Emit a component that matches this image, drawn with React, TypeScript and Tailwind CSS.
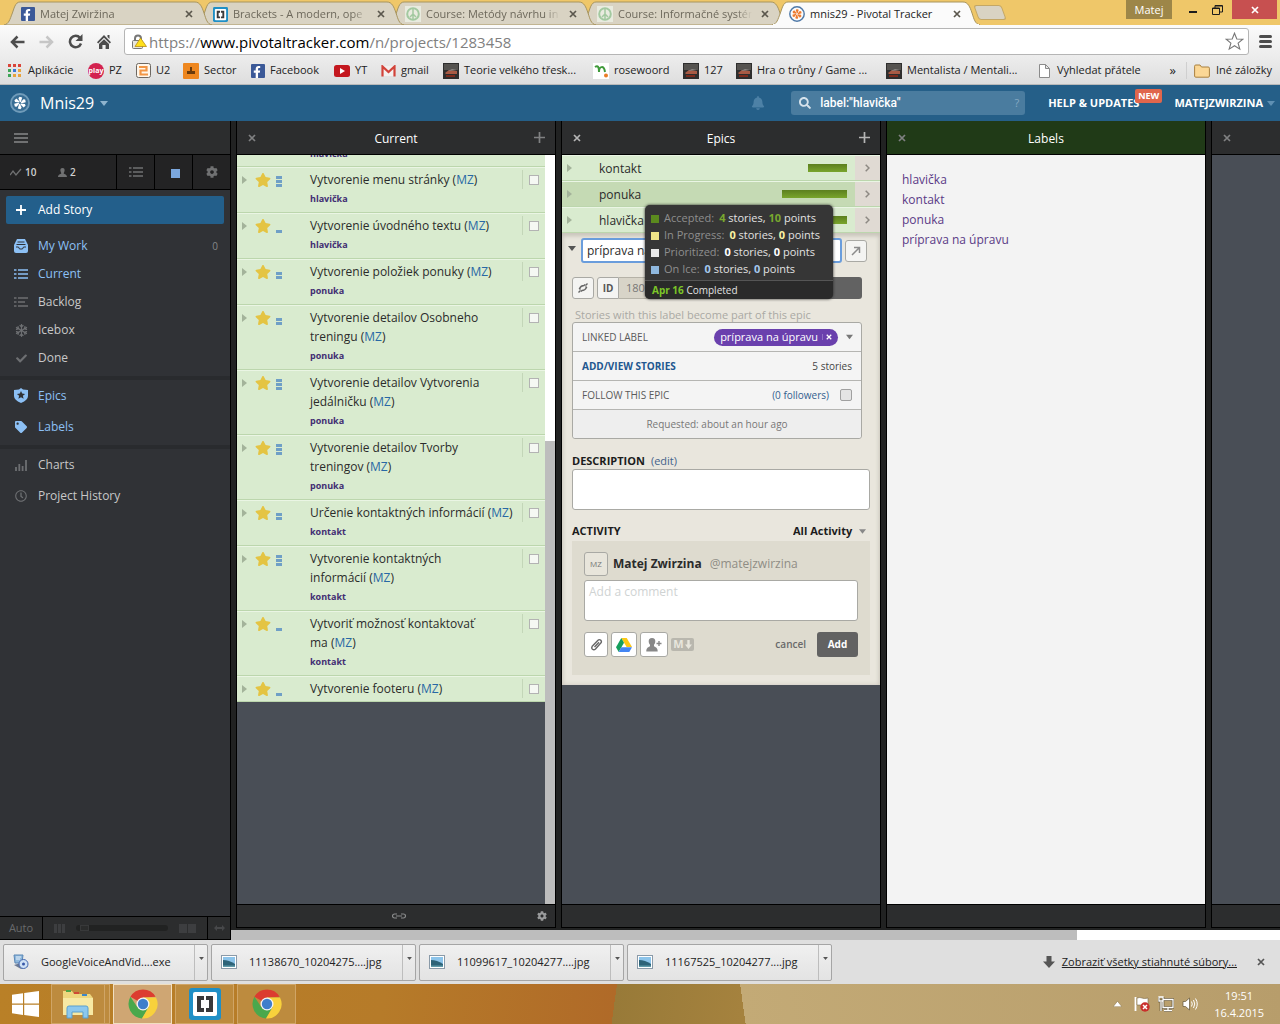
import React from "react";
import { FaBell, FaSearch, FaCog, FaStar, FaTag, FaRegClock, FaCheck, FaRegSnowflake, FaFacebookF } from "react-icons/fa";

type Kids = { children?: React.ReactNode };

const ui = "font-['Open_Sans','Noto_Sans',sans-serif]";

/* ---------- logos ---------- */

function FacebookLogo() {
  return (
    <span className="flex h-[14px] w-[14px] flex-none items-end justify-end overflow-hidden rounded-[1px] bg-[#3b5998] pr-[2px] text-white">
      <FaFacebookF size={12} />
    </span>
  );
}

function BracketsLogo({ size }: { size: number }) {
  return (
    <svg width={size} height={size} viewBox="0 0 32 32" className="flex-none" aria-hidden="true">
      <rect width="32" height="32" rx="3" fill="#1f8fc6" />
      <rect x="4" y="4" width="24" height="24" rx="2" fill="#fff" />
      <path d="M8 8h7v4h-3v8h3v4H8zM24 8h-7v4h3v8h-3v4h7z" fill="#39393b" />
    </svg>
  );
}

function CourseLogo() {
  return (
    <svg width="16" height="16" viewBox="0 0 16 16" className="flex-none" aria-hidden="true">
      <rect width="16" height="16" fill="#e9ebdf" />
      <circle cx="8" cy="8" r="5.8" fill="none" stroke="#a3c9a0" strokeWidth="2" />
      <path d="M8 3v10M5 11l3-3 3 3" stroke="#a3c9a0" strokeWidth="1.500" fill="none" />
    </svg>
  );
}

function PivotalLogo({ ring, petal, size }: { ring: string; petal: string; size: number }) {
  return (
    <svg width={size} height={size} viewBox="0 0 20 20" className="flex-none" aria-hidden="true">
      <circle cx="10" cy="10" r="9" fill="none" stroke={ring} strokeWidth="1.800" />
      {[0, 60, 120, 180, 240, 300].map((a) => (
        <path key={a} d="M10 9.200 L8.400 5.200 L9.600 3.800 L12.200 4.600 L11 8.800Z" fill={petal} transform={`rotate(${a} 10 10)`} />
      ))}
    </svg>
  );
}

function ChromeLogo() {
  return (
    <svg width="30" height="30" viewBox="0 0 30 30" aria-hidden="true">
      <path d="M15 15L2.440 7.750A14.500 14.500 0 0 1 27.560 7.750L15 8.500Z" fill="#dc3c30" />
      <path d="M2.440 7.750A14.500 14.500 0 0 0 14 29.500L20.600 18.300L15 15L9.400 18.300Z" fill="#4aa84c" />
      <path d="M14 29.500A14.500 14.500 0 0 0 28 8.500H15L20.600 18.300Z" fill="#f8d13c" />
      <circle cx="15" cy="15" r="6.500" fill="#f4f4f4" />
      <circle cx="15" cy="15" r="5.200" fill="#3f7ecb" />
    </svg>
  );
}

function VideoThumb() {
  return (
    <svg width="16" height="16" viewBox="0 0 16 16" className="flex-none" aria-hidden="true">
      <rect width="16" height="16" fill="#2e2e2e" />
      <rect x="1" y="1" width="14" height="6" fill="#555350" />
      <path d="M2 10l4-3 8 1v3H3z" fill="#a85a44" />
      <path d="M5 8l4-2 5 1z" fill="#8d8986" />
      <path d="M3 13h9" stroke="#7b2a1c" strokeWidth="2" />
    </svg>
  );
}

/* ---------- browser chrome ---------- */

function Cross({ className = "" }: { className?: string }) {
  return (
    <svg width="8" height="8" viewBox="0 0 8 8" className={className} aria-hidden="true">
      <path d="M1 1l6 6M7 1l-6 6" stroke="currentColor" strokeWidth="1.700" />
    </svg>
  );
}

function Tab({ icon, title, active, layer }: { icon: React.ReactNode; title: string; active?: boolean; layer: string }) {
  return (
    <div className={`relative -mr-4 flex h-6 w-52 flex-none items-center ${layer}`}>
      <svg className="absolute inset-0 h-full w-full" viewBox="0 0 208 24" preserveAspectRatio="none" aria-hidden="true">
        <path d="M0 24C5 23 6 18 8 13S11 1 16 1H191C196 1 198 6 200 12S203 23 208 24Z" fill={active ? "#fbfbfb" : "#d9d3c3"} stroke="#a8955f" />
        {active && <path d="M1 24H207" stroke="#fbfbfb" strokeWidth="2" />}
      </svg>
      <button className={`relative ml-[17px] flex w-[155px] items-center gap-[5px] overflow-hidden whitespace-nowrap pt-[2px] text-left text-[11px] leading-4 ${active ? "text-[#222]" : "text-[#6d685b]"}`}>
        {icon}
        <span className={active ? "" : "min-w-0 flex-1 overflow-hidden [mask-image:linear-gradient(to_right,black_88%,transparent)]"}>{title}</span>
      </button>
      <button aria-label={`Close ${title}`} className="relative ml-auto mr-[19px] mt-[2px] text-[#5b574d]">
        <Cross />
      </button>
    </div>
  );
}

function TabStrip() {
  return (
    <div className="flex h-[25px] flex-none items-start bg-[#efc769]">
      <div className="flex min-w-0 pl-1 pt-px">
        <Tab layer="z-[4]" icon={<FacebookLogo />} title="Matej Zwiržina" />
        <Tab layer="z-[3]" icon={<BracketsLogo size={15} />} title="Brackets - A modern, ope" />
        <Tab layer="z-[2]" icon={<CourseLogo />} title="Course: Metódy návrhu in" />
        <Tab layer="z-[1]" icon={<CourseLogo />} title="Course: Informačné systém" />
        <Tab layer="z-[5]" active icon={<PivotalLogo size={16} ring="#4f79a8" petal="#ee7b30" />} title="mnis29 - Pivotal Tracker" />
      </div>
      <button aria-label="New tab" className="ml-3 mt-[5px] h-[15px] w-7 skew-x-[20deg] rounded-[3px] border border-[#c4a765] bg-[#d9d3c3]" />
      <div className="ml-auto flex items-start pr-[3px]">
        <button className="h-[19px] w-[46px] bg-[#9d8648] text-[11px] leading-[18px] text-white">Matej</button>
        <button aria-label="Minimize" className="flex h-[19px] w-[33px] items-center justify-center pl-2 pt-[5px]">
          <span className="h-[2px] w-2 bg-[#1c1c1c]" />
        </button>
        <button aria-label="Restore" className="mr-[5px] flex h-[19px] w-[22px] items-center justify-end pr-1">
          <svg width="11" height="10" viewBox="0 0 11 10" aria-hidden="true">
            <path d="M.5 3h7v6.500h-7zM3 3V.5h7.500V7H8M.5 3.500h7M3 1h7" fill="none" stroke="#1c1c1c" />
          </svg>
        </button>
        <button aria-label="Close window" className="flex h-[19px] w-[45px] items-center justify-center bg-[#c75050] text-white">
          <Cross />
        </button>
      </div>
    </div>
  );
}

function Toolbar() {
  return (
    <div className="flex h-8 flex-none items-center bg-gradient-to-b from-[#fbfbfb] to-[#ececec] pr-2 pt-px">
      <div className="flex w-[124px] flex-none items-center gap-[14px] pl-[10px] text-[#4d4d4d]">
        <button aria-label="Back">
          <svg width="15" height="14" viewBox="0 0 15 14" aria-hidden="true">
            <path d="M14.500 7H2M7.500 1.500L2 7l5.500 5.500" fill="none" stroke="currentColor" strokeWidth="2.500" />
          </svg>
        </button>
        <button aria-label="Forward" className="text-[#c6c6c6]">
          <svg width="15" height="14" viewBox="0 0 15 14" aria-hidden="true">
            <path d="M.5 7H13M7.500 1.500L13 7l-5.500 5.500" fill="none" stroke="currentColor" strokeWidth="2.500" />
          </svg>
        </button>
        <button aria-label="Reload">
          <svg width="15" height="15" viewBox="0 0 15 15" aria-hidden="true">
            <path d="M12 3.800A5.700 5.700 0 1 0 13 9.500" fill="none" stroke="currentColor" strokeWidth="2.500" />
            <path d="M14.500 0v7H7.500z" fill="currentColor" />
          </svg>
        </button>
        <button aria-label="Home">
          <svg width="14" height="14" viewBox="0 0 14 14" aria-hidden="true">
            <path d="M7 0l7 7.200-1.200 1.200L7 2.800 1.200 8.400 0 7.200zM10.500 0h2v4l-2-2zM7 4.200l5 4.800v5H8.600v-4H5.400v4H2V9z" fill="currentColor" />
          </svg>
        </button>
      </div>
      <div className="flex h-[27px] min-w-0 flex-1 items-center rounded-[3px] border border-[#b5b5b5] bg-white pl-[6px] pr-1">
        <svg width="16" height="16" viewBox="0 0 16 16" className="flex-none" aria-hidden="true">
          <path d="M4 7V4.500a3 3 0 0 1 6 0V7" fill="none" stroke="#777" strokeWidth="2" />
          <rect x="1.500" y="6.500" width="10" height="8" rx="1" fill="#e8e6dd" stroke="#777" />
          <path d="M9.500 4L15.500 12.500H4z" fill="#ffe01b" stroke="#b98f12" strokeWidth=".8" />
        </svg>
        <div className="ml-[2px] flex-1 whitespace-nowrap text-[15px] leading-5 text-[#808080]">
          https://<span className="text-black">www.pivotaltracker.com</span>/n/projects/1283458
        </div>
        <button aria-label="Bookmark this page">
          <svg width="19" height="19" viewBox="0 0 19 19" aria-hidden="true">
            <path d="M9.500 1.200l2.300 5.800 6 .3-4.700 3.800 1.700 6-5.300-3.400-5.300 3.400 1.700-6L1.200 7.300l6-.3z" fill="#fff" stroke="#787878" strokeWidth="1.100" />
          </svg>
        </button>
      </div>
      <button aria-label="Menu" className="ml-[10px] flex w-[13px] flex-col gap-[2px]">
        <span className="h-[3px] rounded-sm bg-[#4d4d4d]" />
        <span className="h-[3px] rounded-sm bg-[#4d4d4d]" />
        <span className="h-[3px] rounded-sm bg-[#4d4d4d]" />
      </button>
    </div>
  );
}

function Mark({ icon, title, width }: { icon: React.ReactNode; title: string; width: string }) {
  return (
    <a href="#" className={`flex flex-none items-center gap-[5px] whitespace-nowrap ${width}`}>
      {icon}
      {title}
    </a>
  );
}

function Bookmarks() {
  const dots = ["#d9453a", "#d9453a", "#d9453a", "#3fa557", "#3b78d8", "#e8a33d", "#3fa557", "#e8a33d", "#e8a33d"];
  return (
    <nav className="flex h-[28px] flex-none items-center border-b border-[#b9b9b9] bg-gradient-to-b from-[#ececec] to-[#dedede] pl-2 pr-2 text-[11px] text-[#222]">
      <a href="#" className="flex w-20 flex-none items-center gap-[7px]">
        <svg width="13" height="13" viewBox="0 0 13 13" aria-hidden="true">
          {dots.map((c, i) => (
            <rect key={i} x={(i % 3) * 5} y={Math.floor(i / 3) * 5} width="3" height="3" fill={c} />
          ))}
        </svg>
        Aplikácie
      </a>
      <Mark width="w-12" title="PZ" icon={<span className="flex h-4 w-4 items-center justify-center rounded-full bg-[#d3224f] text-[7px] font-bold leading-none text-white">play</span>} />
      <Mark
        width="w-[47px]"
        title="U2"
        icon={
          <svg width="15" height="15" viewBox="0 0 15 15" aria-hidden="true">
            <rect x=".5" y=".5" width="14" height="14" rx="2" fill="#fff6ea" stroke="#6d6862" />
            <path d="M3 4h7.500v3.500H4.500v4H12" fill="none" stroke="#f29544" strokeWidth="2.200" />
          </svg>
        }
      />
      <Mark
        width="w-[68px]"
        title="Sector"
        icon={
          <svg width="16" height="16" viewBox="0 0 16 16" aria-hidden="true">
            <rect width="16" height="16" rx="1" fill="#ee871f" />
            <path d="M7 4h2v4h3v3H4V8h3z" fill="#6a3b0c" />
          </svg>
        }
      />
      <Mark width="w-[83px]" title="Facebook" icon={<FacebookLogo />} />
      <Mark
        width="w-[47px]"
        title="YT"
        icon={
          <svg width="16" height="12" viewBox="0 0 16 12" aria-hidden="true">
            <rect width="16" height="12" rx="2.500" fill="#c4181f" />
            <path d="M6 3l5 3-5 3z" fill="#fff" />
          </svg>
        }
      />
      <Mark
        width="w-[62px]"
        title="gmail"
        icon={
          <svg width="15" height="12" viewBox="0 0 15 12" aria-hidden="true">
            <rect x="1" y="1" width="13" height="10" fill="#f3f0ef" />
            <path d="M1.500 11.500V1.500L7.500 7l6-5.500v10" fill="none" stroke="#d2433a" strokeWidth="2.200" />
          </svg>
        }
      />
      <Mark width="w-[150px]" title="Teorie velkého třesk..." icon={<VideoThumb />} />
      <Mark
        width="w-[90px]"
        title="rosewoord"
        icon={
          <svg width="16" height="16" viewBox="0 0 16 16" aria-hidden="true">
            <rect width="16" height="16" fill="#fff" />
            <path d="M2 4c3-2 4 0 4 5 0-6 5-7 6 0" fill="none" stroke="#3f9a3a" strokeWidth="2" />
            <circle cx="13" cy="12.500" r="2" fill="#ea7c25" />
          </svg>
        }
      />
      <Mark width="w-[53px]" title="127" icon={<VideoThumb />} />
      <Mark width="w-[150px]" title="Hra o trůny / Game ..." icon={<VideoThumb />} />
      <Mark width="w-[152px]" title="Mentalista / Mentali..." icon={<VideoThumb />} />
      <Mark
        width="w-[120px]"
        title="Vyhledat přátele"
        icon={
          <svg width="13" height="14" viewBox="0 0 13 14" className="mr-px" aria-hidden="true">
            <path d="M1.500.5h6l4 4v9h-10zM7.500.5v4h4" fill="#fff" stroke="#8b8b8b" />
          </svg>
        }
      />
      <button aria-label="More bookmarks" className="ml-auto mr-[10px] text-[13px]">»</button>
      <a href="#" className="flex flex-none items-center gap-[6px] whitespace-nowrap border-l border-[#cfcfcf] pl-[7px]">
        <svg width="16" height="14" viewBox="0 0 16 14" aria-hidden="true">
          <path d="M.6 12V2.200Q.6 1 1.800 1H6l1.500 2h6.700q1.200 0 1.200 1.200V12q0 1.200-1.200 1.200H1.800Q.6 13.200.6 12z" fill="#fbd795" stroke="#a9803f" />
        </svg>
        Iné záložky
      </a>
    </nav>
  );
}

/* ---------- tracker header ---------- */

function Caret({ className = "" }: { className?: string }) {
  return (
    <svg width="8" height="5" viewBox="0 0 8 5" className={`flex-none ${className}`} aria-hidden="true">
      <path d="M0 0h8L4 5z" fill="currentColor" />
    </svg>
  );
}

function AppHeader() {
  return (
    <header className="flex h-9 flex-none items-center bg-[#255f88] pl-[10px] pr-[5px]">
      <span className="rounded-full bg-[#376d94]">
        <PivotalLogo size={20} ring="#6f9bb9" petal="#fff" />
      </span>
      <button className="ml-[10px] flex items-center gap-[6px] text-[16px] leading-5 text-white">
        Mnis29 <Caret className="text-[#8fb4ce]" />
      </button>
      <button aria-label="Notifications" className="ml-auto mr-[26px] text-[#4d81a6]">
        <FaBell size={14} />
      </button>
      <div className="flex h-6 w-[234px] items-center rounded-[3px] bg-[#4a7c9f] pl-2 pr-[6px]">
        <FaSearch size={12} className="flex-none text-[#d5e2eb]" />
        <input aria-label="Search" defaultValue={'label:"hlavička"'} className="ml-[9px] w-full min-w-0 bg-transparent font-['Roboto','Liberation_Sans',sans-serif] text-[12px] font-medium text-white outline-none" />
        <span className="text-[11px] text-[#85a9c2]">?</span>
      </div>
      <button className="relative ml-[23px] text-[11px] font-bold text-white">
        HELP &amp; UPDATES
        <span className="absolute -top-[6px] left-[87px] rounded-[2px] bg-[#e0664c] px-[3px] text-[9px] leading-[14px]">NEW</span>
      </button>
      <button className="ml-[35px] flex items-center gap-[4px] text-[11px] font-bold text-white">
        MATEJZWIRZINA <Caret className="text-[#5f90b3]" />
      </button>
    </header>
  );
}

/* ---------- sidebar ---------- */

function ListGlyph({ short }: { short?: boolean }) {
  return (
    <svg width="14" height="12" viewBox="0 0 14 12" aria-hidden="true">
      <path d={short ? "M4 2H14M4 6H11M4 10H14" : "M4 2H14M4 6H14M4 10H14"} stroke="currentColor" strokeWidth="1.600" />
      <path d="M0 2H2.500M0 6H2.500M0 10H2.500" stroke="currentColor" strokeWidth="1.600" />
    </svg>
  );
}

function NavItem({ icon, label, on, tall, count }: { icon: React.ReactNode; label: string; on?: boolean; tall?: boolean; count?: string }) {
  return (
    <a href="#" className={`flex items-center pl-[14px] pr-3 text-[12px] ${tall ? "h-[31px]" : "h-7"} ${on ? "text-[#8cc0f5]" : "text-[#c8c8c8]"}`}>
      <span className={`flex w-[14px] justify-center ${on ? "" : "text-[#6d6f72]"}`}>{icon}</span>
      <span className="ml-[10px]">{label}</span>
      {count && <span className="ml-auto text-[10px] text-[#85878a]">{count}</span>}
    </a>
  );
}

function Sidebar() {
  return (
    <aside className="flex w-[231px] flex-none flex-col border-r border-black bg-[#303236]">
      <div className="flex h-[34px] flex-none items-center border-b border-black bg-[#2c2d2e] pl-[14px]">
        <button aria-label="Toggle sidebar" className="flex w-[14px] flex-col gap-[2px]">
          <span className="h-[2px] bg-[#707172]" />
          <span className="h-[2px] bg-[#707172]" />
          <span className="h-[2px] bg-[#707172]" />
        </button>
      </div>
      <div className="flex h-[35px] flex-none items-stretch border-b border-black bg-[#232324] text-[10px] font-semibold text-[#d0d0d0]">
        <div className="flex flex-1 items-center pl-[10px]">
          <svg width="12" height="9" viewBox="0 0 12 9" aria-hidden="true">
            <path d="M0 7L3 3l3 4 5-6" fill="none" stroke="#707172" strokeWidth="1.300" />
          </svg>
          <span className="ml-[3px] w-[33px]">10</span>
          <svg width="9" height="9" viewBox="0 0 9 9" aria-hidden="true">
            <path d="M4.500 0C6.300 0 6.800 1.200 6.600 2.800 6.400 4 5.800 4.600 5.700 5.500 6.500 6.300 9 6.500 9 9H0C0 6.500 2.500 6.300 3.300 5.500 3.200 4.600 2.600 4 2.400 2.800 2.200 1.200 2.700 0 4.500 0z" fill="#707172" />
          </svg>
          <span className="ml-[3px]">2</span>
        </div>
        <button aria-label="List view" className="flex w-[38px] items-center justify-center border-l border-black text-[#707172]">
          <ListGlyph />
        </button>
        <button aria-label="Panel view" className="flex w-[38px] items-center justify-center border-l border-black pl-[3px] pt-[2px]">
          <span className="h-[9px] w-[9px] bg-[#7ba7dd]" />
        </button>
        <button aria-label="Settings" className="flex w-[38px] items-center justify-center border-l border-black text-[#707172]">
          <FaCog size={12} />
        </button>
      </div>
      <button className="mx-[6px] mb-2 mt-[6px] flex h-7 flex-none items-center rounded-[2px] bg-[#235f8b] pl-[10px] text-[12px] text-white">
        <svg width="10" height="10" viewBox="0 0 10 10" aria-hidden="true">
          <path d="M5 0v10M0 5h10" stroke="#fff" strokeWidth="1.800" />
        </svg>
        <span className="ml-3">Add Story</span>
      </button>
      <nav>
        <div className="border-b-4 border-[#292b2e] pb-1">
          <NavItem
            on
            label="My Work"
            count="0"
            icon={
              <svg width="14" height="14" viewBox="0 0 14 14" aria-hidden="true">
                <path d="M3 0h8l3 6v6q0 2-2 2H2q-2 0-2-2V6z" fill="currentColor" />
                <path d="M3.500 3h7M2.500 5.500h9M2 8h2.500l1 2h3l1-2H12" stroke="#303236" fill="none" />
              </svg>
            }
          />
          <NavItem on label="Current" icon={<ListGlyph />} />
          <NavItem label="Backlog" icon={<ListGlyph short />} />
          <NavItem label="Icebox" icon={<FaRegSnowflake size={13} />} />
          <NavItem label="Done" icon={<FaCheck size={11} />} />
        </div>
        <div className="border-b-4 border-[#292b2e] pb-[3px]">
          <NavItem
            on
            tall
            label="Epics"
            icon={
              <svg width="14" height="15" viewBox="0 0 14 15" aria-hidden="true">
                <path d="M7 0l2 1.500L14 2v6q0 4-7 7Q0 12 0 8V2l5-.5z" fill="currentColor" />
                <path d="M7 3l1.200 2.600 2.900.3-2.200 1.900.7 2.900L7 9.200l-2.600 1.500.7-2.900-2.200-1.900 2.900-.3z" fill="#303236" />
              </svg>
            }
          />
          <NavItem on tall label="Labels" icon={<FaTag size={12} />} />
        </div>
        <NavItem
          tall
          label="Charts"
          icon={
            <svg width="12" height="12" viewBox="0 0 12 12" aria-hidden="true">
              <path d="M1 12V8M4.300 12V5M7.600 12V7M11 12V1" stroke="currentColor" strokeWidth="1.800" />
            </svg>
          }
        />
        <NavItem tall label="Project History" icon={<FaRegClock size={12} />} />
      </nav>
      <div className="mt-auto flex h-[24px] flex-none items-stretch border-y border-black bg-[#2c2d2e] text-[11px] text-[#686a6c]">
        <button className="w-[43px] border-r border-black">Auto</button>
        <div className="flex flex-1 items-center gap-[11px] px-[11px]">
          <span className="flex gap-px">
            <span className="h-[9px] w-[3px] bg-[#3d3e40]" />
            <span className="h-[9px] w-[3px] bg-[#3d3e40]" />
            <span className="h-[9px] w-[3px] bg-[#3d3e40]" />
          </span>
          <span className="h-[6px] flex-1 rounded bg-[#212222] pl-[4px]">
            <span className="block h-[6px] w-[9px] border border-[#38393a] bg-[#2b2c2c]" />
          </span>
          <span className="flex gap-px">
            <span className="h-[9px] w-2 bg-[#3d3e40]" />
            <span className="h-[9px] w-2 bg-[#3d3e40]" />
          </span>
        </div>
        <button aria-label="Resize panels" className="flex w-[23px] items-center justify-center border-l border-black text-[#47484a]">
          <svg width="11" height="6" viewBox="0 0 11 6" aria-hidden="true">
            <path d="M0 3l3-3v2h5V0l3 3-3 3V4H3v2z" fill="currentColor" />
          </svg>
        </button>
      </div>
    </aside>
  );
}

/* ---------- panels ---------- */

function Panel({ title, add, lit, tone = "bg-[#2c2d2e]", children, foot }: { title: string; add?: boolean; lit?: boolean; tone?: string; foot?: React.ReactNode } & Kids) {
  return (
    <section className="relative flex w-[320px] flex-none flex-col border-x border-b border-black bg-[#494e56]">
      <div className={`flex h-[34px] flex-none items-center border-b border-black px-[10px] ${tone} ${lit ? "text-[#b5b5b5]" : "text-[#808182]"}`}>
        <button aria-label={`Close ${title}`} className="flex w-3 pl-px"><Cross /></button>
        <h2 className="flex-1 pt-[2px] text-center text-[12px] text-white">{title}</h2>
        <button aria-label={`Add to ${title}`} className="flex w-3 justify-end">
          {add && (
            <svg width="11" height="11" viewBox="0 0 11 11" aria-hidden="true">
              <path d="M5.500 0v11M0 5.500h11" stroke="currentColor" strokeWidth="1.700" />
            </svg>
          )}
        </button>
      </div>
      <div className="flex min-h-0 flex-1">{children}</div>
      <div className="flex h-[23px] flex-none items-center border-t border-black bg-[#2c2d2e]">{foot}</div>
    </section>
  );
}

const stories: { title: string; points: number; label?: string }[] = [
  { title: "Vytvorenie menu stránky", points: 3, label: "hlavička" },
  { title: "Vytvorenie úvodného textu", points: 1, label: "hlavička" },
  { title: "Vytvorenie položiek ponuky", points: 2, label: "ponuka" },
  { title: "Vytvorenie detailov Osobneho treningu", points: 2, label: "ponuka" },
  { title: "Vytvorenie detailov Vytvorenia jedálničku", points: 3, label: "ponuka" },
  { title: "Vytvorenie detailov Tvorby treningov", points: 3, label: "ponuka" },
  { title: "Určenie kontaktných informácií", points: 2, label: "kontakt" },
  { title: "Vytvorenie kontaktných informácií", points: 3, label: "kontakt" },
  { title: "Vytvoriť možnosť kontaktovať ma", points: 1, label: "kontakt" },
  { title: "Vytvorenie footeru", points: 1 },
];

function Arrow() {
  return (
    <svg width="5" height="8" viewBox="0 0 5 8" className="flex-none" aria-hidden="true">
      <path d="M0 0v8l5-4z" fill="#a3b39a" />
    </svg>
  );
}

function CurrentPanel() {
  return (
    <Panel
      title="Current"
      add
      foot={
        <>
          <span className="w-[24px]" />
          <button aria-label="Link" className="mx-auto text-[#8a8b8c]">
            <svg width="14" height="6" viewBox="0 0 14 6" aria-hidden="true">
              <path d="M5 1H2.500a2 2 0 0 0 0 4H5M9 1h2.500a2 2 0 0 1 0 4H9M4 3h6" fill="none" stroke="currentColor" strokeWidth="1.200" />
            </svg>
          </button>
          <button aria-label="Panel settings" className="mr-2 text-[#9a9b9c]">
            <FaCog size={10} />
          </button>
        </>
      }
    >
      <div className="min-w-0 flex-1 overflow-hidden">
        <div className="flex h-3 items-end overflow-hidden border-b border-[#bcd6ad] bg-[#d9ebcf] pb-[5px] pl-[73px] text-[9px] font-bold leading-[15px] text-[#422e73]">hlavička</div>
        {stories.map((s) => (
          <article key={s.title} className="flex items-start border-b border-t border-b-[#bcd6ad] border-t-[#eaf5e4] bg-[#d9ebcf] pb-[3px] pl-[5px] pr-[6px] pt-[2px]">
            <button aria-label="Expand story" className="mt-[6px]"><Arrow /></button>
            <FaStar size={16} className="ml-2 mt-[2px] flex-none text-[#e4c443]" />
            <div className="ml-[5px] flex h-[17px] w-[6px] flex-none flex-col justify-end gap-px">
              {Array.from({ length: s.points }, (_, i) => (
                <span key={i} className="h-[3px] bg-[#6f9fc6]" />
              ))}
            </div>
            <div className="ml-7 w-[208px] flex-none text-[12px] leading-[19px] text-[#2b2b2b]">
              {s.title}{"\u00a0"}(<a href="#" className="text-[#2868a5]">MZ</a>)
              {s.label && <a href="#" className="block text-[9px] font-bold leading-5 text-[#422e73]">{s.label}</a>}
            </div>
            <div className="ml-auto flex h-[19px] items-center border-l border-[#c3d6b8] pl-[6px]">
              <input type="checkbox" aria-label={s.title} className="h-[10px] w-[10px] appearance-none border border-[#b3b3b3] bg-[#f5f8f3]" />
            </div>
          </article>
        ))}
      </div>
      <div className="flex w-[10px] flex-none flex-col bg-white pt-[286px]">
        <div className="flex-1 bg-[#bdbdbd]" />
      </div>
    </Panel>
  );
}

function EpicRow({ name, bar, tone }: { name: string; bar: string; tone: string }) {
  return (
    <div className={`flex h-[26px] items-stretch border-b border-t border-b-[#bcd6ad] border-t-[#eaf5e4] ${tone}`}>
      <button className="flex flex-1 items-center gap-[27px] pl-[5px] text-[12px] text-[#2b2b2b]">
        <Arrow />
        <span className="pt-[2px]">{name}</span>
      </button>
      <span className={`mr-2 mt-2 h-2 bg-gradient-to-b from-[#5c7f1f] to-[#79a52c] ${bar}`} />
      <button aria-label={`Open ${name}`} className="flex w-[25px] items-center justify-center bg-[#e0dad3] text-[#8d8983]">
        <svg width="5" height="8" viewBox="0 0 5 8" aria-hidden="true">
          <path d="M.7.7L4 4 .7 7.300" fill="none" stroke="currentColor" strokeWidth="1.500" />
        </svg>
      </button>
    </div>
  );
}

function TipRow({ swatch, name, tone, stories: n, points }: { swatch: string; name: string; tone: string; stories: number; points: number }) {
  return (
    <div className="flex h-[17px] items-center whitespace-nowrap text-[11px] text-[#e2e2e2]">
      <span className={`mr-[5px] h-2 w-2 ${swatch}`} />
      <span className="mr-[5px] text-[#8e8e8e]">{name}:</span>
      <span><b className={tone}>{n}</b> stories, <b className={tone}>{points}</b> points</span>
    </div>
  );
}

function Tip() {
  return (
    <div role="tooltip" className="absolute left-[83px] top-[84px] z-10 w-[188px] rounded-[5px] bg-[#363636] pt-[5px] shadow-[0_0_3px_#222]">
      <div className="px-[6px] pb-[2px]">
        <TipRow swatch="bg-[#5b8a1e]" name="Accepted" tone="text-[#79a82f]" stories={4} points={10} />
        <TipRow swatch="bg-[#efe487]" name="In Progress" tone="text-[#fbf3a3]" stories={0} points={0} />
        <TipRow swatch="bg-[#e8e8e8]" name="Prioritized" tone="text-white" stories={0} points={0} />
        <TipRow swatch="bg-[#8fb8de]" name="On Ice" tone="text-[#a5c8ec]" stories={0} points={0} />
      </div>
      <div className="h-[19px] rounded-b-[5px] border-t border-[#555] bg-[#2a2a2a] px-[7px] text-[10px] leading-[18px] text-[#e2e2e2]">
        <b className="text-[#7cc528]">Apr 16</b> Completed
      </div>
    </div>
  );
}

const box = "flex items-center justify-center rounded-[3px] border border-[#a9a9a4] bg-[#f4f4f2]";

function EpicForm() {
  return (
    <form className="flex flex-col bg-[#e9e6dd] pb-[10px] pl-[10px] pr-[10px] pt-[5px] shadow-[inset_0_3px_4px_#c9c5bb,inset_0_0_5px_#cfcac0]">
      <div className="-ml-1 flex h-[25px] items-center">
        <button type="button" aria-label="Collapse" className="mb-[5px] text-[#555]"><Caret /></button>
        <input aria-label="Epic title" defaultValue="príprava na úpravu" className="ml-[5px] mr-[3px] h-[25px] min-w-0 flex-1 rounded-[3px] border-2 border-[#6a9ddc] bg-white px-1 text-[12px] text-[#2b2b2b] outline-none" />
        <button type="button" aria-label="Open epic" className={`mr-[3px] h-[22px] w-[22px] ${box} text-[#8b8b8b]`}>
          <svg width="10" height="10" viewBox="0 0 10 10" aria-hidden="true">
            <path d="M1 9l7-7M3 1.500h5.500V7" fill="none" stroke="currentColor" strokeWidth="1.500" />
          </svg>
        </button>
      </div>
      <div className="mr-2 mt-[14px] flex h-[22px]">
        <button type="button" aria-label="Copy link" className={`w-[22px] ${box}`}>
          <svg width="10" height="10" viewBox="0 0 10 10" aria-hidden="true">
            <path d="M2.500 6.500L1.500 5.500Q3 2.500 6 2.500L7 1.500M7.500 3.500L8.500 4.500Q7 7.500 4 7.500L3 8.500M.5 9.500l2-2M9.500.5l-2 2" fill="none" stroke="#666" strokeWidth="1.400" />
          </svg>
        </button>
        <button type="button" className={`ml-[3px] w-[22px] ${box} rounded-r-none text-[10px] font-bold text-[#555]`}>ID</button>
        <input aria-label="Epic ID" readOnly defaultValue="180" className="w-[60px] border-y border-[#b5b2a7] bg-[#d8d4c8] px-[7px] text-[11px] text-[#777] outline-none" />
        <button type="button" aria-label="More actions" className="flex-1 rounded-r-[3px] bg-[#626262]" />
      </div>
      <p className="ml-[3px] mt-[9px] text-[11px] leading-[14px] text-[#aaa9a4]">Stories with this label become part of this epic</p>
      <div className="mr-2 rounded-[3px] border border-[#a9a9a4] bg-[#f4f4f4] text-[10px] text-[#5a5a5a]">
        <div className="flex h-[29px] items-center border-b border-[#b5b5b2] pl-[9px] pr-2">
          LINKED LABEL
          <span className="ml-auto flex h-[17px] items-center rounded-full bg-[#6a40ad] pl-[6px] pr-[6px] text-[11px] text-white">
            príprava na úpravu
            <button type="button" aria-label="Remove label" className="ml-[4px] border-l border-[#8f6fc4] pl-[3px]"><Cross className="h-[6px] w-[6px]" /></button>
          </span>
          <button type="button" aria-label="Choose label" className="ml-2 text-[#777]"><Caret className="h-[6px] w-[7px]" /></button>
        </div>
        <div className="flex h-[29px] items-center justify-between border-b border-[#b5b5b2] px-[9px]">
          <a href="#" className="font-bold text-[#22578f]">ADD/VIEW STORIES</a>
          <span className="text-[#444]">5 stories</span>
        </div>
        <div className="flex h-[29px] items-center border-b border-[#b5b5b2] px-[9px]">
          <label htmlFor="follow">FOLLOW THIS EPIC</label>
          <a href="#" className="ml-auto mr-[11px] text-[#33608f]">(0 followers)</a>
          <input id="follow" type="checkbox" className="h-3 w-3 appearance-none rounded-[2px] border border-[#a0a0a0] bg-[#e4e4e4]" />
        </div>
        <div className="flex h-7 items-center justify-center rounded-b-[3px] bg-[#eeeeee] text-[#777]">Requested: about an hour ago</div>
      </div>
      <div className="mt-[14px] flex h-4 items-center gap-[6px] text-[11px]">
        <label htmlFor="description" className="font-bold text-[#1c1c1c]">DESCRIPTION</label>
        <a href="#" className="text-[#44628b]">(edit)</a>
      </div>
      <textarea id="description" className="block h-[41px] w-full resize-none rounded-[3px] border border-[#a9a9a4] bg-white" />
      <div className="mt-3 flex h-[19px] items-center justify-between text-[11px] font-bold text-[#1c1c1c]">
        <h3>ACTIVITY</h3>
        <span className="flex items-center pr-1">
          <select aria-label="Activity filter" className="w-[66px] appearance-none bg-transparent pr-1 outline-none">
            <option>All Activity</option>
          </select>
          <Caret className="h-[5px] w-[7px] text-[#888]" />
        </span>
      </div>
      <div className="bg-[#dedbcf] px-3 pb-[18px] pt-[11px]">
        <div className="flex h-6 items-center">
          <span className="flex h-6 w-6 items-center justify-center rounded-[3px] border border-[#a9a9a4] bg-[#e8e5db] text-[8px] text-[#777]">MZ</span>
          <b className="ml-[5px] text-[12px] text-[#2b2b2b]">Matej Zwirzina</b>
          <span className="ml-2 text-[12px] text-[#8f8d85]">@matejzwirzina</span>
        </div>
        <textarea aria-label="Comment" placeholder="Add a comment" className="mt-[4px] block h-[41px] w-full resize-none rounded-[3px] border border-[#a9a9a4] bg-white px-1 py-[2px] text-[12px] placeholder:text-[#cfd3d3]" />
        <div className="mt-[11px] flex h-[25px] items-stretch">
          <button type="button" aria-label="Attach file" className={`w-6 ${box} bg-white`}>
            <svg width="13" height="13" viewBox="0 0 13 13" aria-hidden="true">
              <path d="M2 8.500l6-6.300c1.500-1.500 4.500.6 3 2.500L5.500 11C3.500 13 .5 10.500 2.300 8.500M4.500 9l4.500-4.700" fill="none" stroke="#666" strokeWidth="1.400" />
            </svg>
          </button>
          <button type="button" aria-label="Attach from drive" className={`ml-[3px] w-[26px] ${box} bg-white`}>
            <svg width="16" height="14" viewBox="0 0 16 14" aria-hidden="true">
              <path d="M5.300 0h5.400L16 9h-5.400z" fill="#fbc816" />
              <path d="M5.300 0L0 9.300 2.700 14l5.300-9.300z" fill="#159f5c" />
              <path d="M5.300 9.300H16L13.300 14H2.700z" fill="#4385f3" />
            </svg>
          </button>
          <button type="button" aria-label="Mention someone" className={`ml-[3px] w-7 ${box} bg-white`}>
            <svg width="16" height="14" viewBox="0 0 16 14" aria-hidden="true">
              <path d="M6 0c2.500 0 3.300 1.500 3.300 3.500 0 1.500-.8 2.600-1.300 3.300v1.500c1 .8 3.700 1 3.700 5.200H.3C.3 9.300 3 9.100 4 8.300V6.800C3.500 6.100 2.700 5 2.700 3.500 2.700 1.500 3.500 0 6 0z" fill="#888" />
              <path d="M13 3v5M10.500 5.500h5" stroke="#888" strokeWidth="1.400" />
            </svg>
          </button>
          <span className="ml-[3px] flex h-[13px] w-[23px] items-center justify-center gap-px self-center rounded-[2px] bg-[#b9b7ae] text-[11px] font-bold text-[#e8e6dd]">
            M
            <svg width="7" height="9" viewBox="0 0 7 9" aria-hidden="true">
              <path d="M2.300 0h2.400v4.500H7L3.500 9 0 4.500h2.300z" fill="currentColor" />
            </svg>
          </span>
          <button type="button" className="ml-auto mr-[11px] text-[10px] font-semibold text-[#6a6a6a]">cancel</button>
          <button type="button" className="w-[41px] rounded-[3px] bg-[#626262] text-[10px] font-bold text-white">Add</button>
        </div>
      </div>
    </form>
  );
}

function EpicsPanel() {
  return (
    <Panel title="Epics" add lit>
      <Tip />
      <div className="min-w-0 flex-1">
        <EpicRow name="kontakt" bar="w-[39px]" tone="bg-[#d9ebcf]" />
        <EpicRow name="ponuka" bar="w-[65px]" tone="bg-[#c5dab4]" />
        <EpicRow name="hlavička" bar="w-[39px]" tone="bg-[#d9ebcf]" />
        <EpicForm />
      </div>
    </Panel>
  );
}

function LabelsPanel() {
  return (
    <Panel title="Labels" tone="bg-[#203a17]">
      <ul className="flex-1 bg-[#f3f3f3] px-[15px] pt-[15px] text-[12px] leading-5 text-[#5a3a86]">
        {["hlavička", "kontakt", "ponuka", "príprava na úpravu"].map((l) => (
          <li key={l}><a href="#">{l}</a></li>
        ))}
      </ul>
    </Panel>
  );
}

/* ---------- downloads and taskbar ---------- */

function Download({ name, exe }: { name: string; exe?: boolean }) {
  return (
    <div className="flex h-[37px] w-[205px] flex-none rounded-[2px] border border-[#a5a5a5] bg-gradient-to-b from-[#f0f0f0] to-[#e3e3e3]">
      <button className="flex flex-1 items-center whitespace-nowrap pl-[9px] text-[11px] text-[#222]">
        {exe ? (
          <svg width="16" height="17" viewBox="0 0 16 17" aria-hidden="true">
            <path d="M1 1h9l-1 8H2z" fill="#8fb8dd" stroke="#5a87b5" />
            <path d="M3 3h5M3 5h4" stroke="#e7f1fa" />
            <path d="M1 11l7 4 7-2-4-5z" fill="#6c7a94" />
            <circle cx="10.500" cy="10" r="4.500" fill="#cfe1f5" stroke="#4468b0" />
            <circle cx="10.500" cy="10" r="1.500" fill="#3656a8" />
          </svg>
        ) : (
          <svg width="16" height="14" viewBox="0 0 16 14" aria-hidden="true">
            <rect x=".5" y=".5" width="15" height="13" fill="#fff" stroke="#8a9aa8" />
            <rect x="2" y="2" width="12" height="10" fill="#8cc4ea" />
            <path d="M2 5q6 0 12 4v3H2z" fill="#2d6378" />
            <path d="M2 10.500h12V12H2z" fill="#5f9aa8" />
          </svg>
        )}
        <span className="ml-3">{name}</span>
      </button>
      <button aria-label={`Options for ${name}`} className="flex w-[13px] items-start justify-center border-l border-[#bdbdbd] pt-3 text-[#555]">
        <Caret className="h-[3px] w-[5px]" />
      </button>
    </div>
  );
}

function Downloads() {
  return (
    <div className="flex h-11 flex-none items-center gap-[3px] bg-[#dfdfdf] pl-[3px] pr-[15px]">
      <Download name="GoogleVoiceAndVid....exe" exe />
      <Download name="11138670_10204275....jpg" />
      <Download name="11099617_10204277....jpg" />
      <Download name="11167525_10204277....jpg" />
      <svg width="12" height="12" viewBox="0 0 12 12" className="ml-auto flex-none" aria-hidden="true">
        <path d="M3.500 0h5v5.500H12L6 12 0 5.500h3.500z" fill="#555" />
      </svg>
      <a href="#" className="ml-1 whitespace-nowrap text-[11px] text-[#222] underline">Zobraziť všetky stiahnuté súbory...</a>
      <button aria-label="Close downloads" className="ml-[17px] text-[#555]"><Cross /></button>
    </div>
  );
}

function Task({ label, active, children, width = "w-[59px]" }: { label: string; active?: boolean; width?: string } & Kids) {
  return (
    <button aria-label={label} className={`flex h-10 ${width} flex-none items-center justify-center border ${active ? "border-[#f1dfc0] bg-[#cfa673]" : "border-[#d0a566] bg-[#bd8b3e]"}`}>
      {children}
    </button>
  );
}

function Taskbar() {
  return (
    <footer className="flex h-10 flex-none items-center bg-[linear-gradient(82deg,transparent_0%,transparent_58%,#c3aa76_58%,#b79d6b_100%),linear-gradient(98deg,#b98027_0%,#b67b29_30%,#b06a28_48%,#987a38_48%,#a5823e_58%)] pr-4">
      <button aria-label="Start" className="ml-3 mr-3">
        <svg width="27" height="26" viewBox="0 0 27 26" aria-hidden="true">
          <path d="M0 3.700L11 2.200V12.500H0zM12.200 2L27 0V12.500H12.200zM0 13.700H11V23.900L0 22.300zM12.200 13.700H27V26L12.200 24z" fill="#fff" />
        </svg>
      </button>
      <Task label="Explorer" width="w-[54px]">
        <svg width="32" height="30" viewBox="0 0 32 30" aria-hidden="true">
          <path d="M1 2h9l2 3h16l3 4v17H1z" fill="#eed77e" />
          <path d="M4 1h5v2H4z" fill="#4fa546" />
          <path d="M12 3h5v2h-5z" fill="#cf4a35" />
          <path d="M20 5h5v2h-5z" fill="#3f87c8" />
          <path d="M1 9h30v17H1z" fill="#f7e9a4" />
          <path d="M5 29V19q0-2 2-2h17q2 0 2 2v10h-5v-6H10v6z" fill="#8cc8ee" stroke="#5a9fcd" />
        </svg>
      </Task>
      <span className="mr-[3px] h-10 w-[5px] border border-l-0 border-[#d0a566] bg-[#bd8b3e]" />
      <div className="flex gap-[3px]">
        <Task label="Chrome" active><ChromeLogo /></Task>
        <Task label="Brackets"><BracketsLogo size={32} /></Task>
        <Task label="Chrome, second window"><ChromeLogo /></Task>
      </div>
      <div className="ml-auto flex items-center text-white">
        <svg width="9" height="6" viewBox="0 0 8 5" aria-hidden="true"><path d="M0 5h8L4 0z" fill="#fff" stroke="#8a744a" strokeWidth=".5" /></svg>
        <svg width="16" height="16" viewBox="0 0 16 16" className="ml-3" aria-hidden="true">
          <path d="M1.500 1v14" stroke="#fff" strokeWidth="1.800" />
          <path d="M3 2q3-1 5 0t6 0v7H3z" fill="#fff" stroke="#7b6a48" strokeWidth=".6" />
          <circle cx="11" cy="11" r="4.700" fill="#c9302c" />
          <path d="M9 9l4 4M13 9l-4 4" stroke="#fff" strokeWidth="1.500" />
        </svg>
        <svg width="16" height="16" viewBox="0 0 16 16" className="ml-2" aria-hidden="true">
          <path d="M5 3.500h10v8H5zM10 11.500V14M6 14.500h8M3 6v9M1 1v4h4V1" fill="none" stroke="#554a33" strokeWidth="2.600" />
          <path d="M5 3.500h10v8H5zM10 11.500V14M6 14.500h8M3 6v9M1 1v4h4V1z" fill="none" stroke="#fff" strokeWidth="1.300" />
        </svg>
        <svg width="16" height="14" viewBox="0 0 16 14" className="ml-2" aria-hidden="true">
          <path d="M1 4.500h2.500L7.500 1v12L3.500 9.500H1z" fill="#fff" stroke="#5f5236" strokeWidth=".7" />
          <path d="M9.500 4.500q1.500 2.500 0 5M11.500 3q2.500 4 0 8M13.500 1.500q3.500 5.500 0 11" fill="none" stroke="#fff" />
        </svg>
        <div className="ml-4 text-center text-[11px] leading-[17px]">
          <div>19:51</div>
          <div>16.4.2015</div>
        </div>
      </div>
    </footer>
  );
}

export default function App() {
  return (
    <div className={`flex h-screen flex-col overflow-hidden ${ui}`}>
      <TabStrip />
      <Toolbar />
      <Bookmarks />
      <AppHeader />
      <main className="flex min-h-0 flex-1 bg-[#212222]">
        <Sidebar />
        <div className="flex min-w-0 flex-1 flex-col">
          <div className="flex min-h-0 flex-1 gap-[5px] overflow-hidden pb-[2px] pl-[5px]">
            <CurrentPanel />
            <EpicsPanel />
            <LabelsPanel />
            <Panel title="">{null}</Panel>
          </div>
          <div className="flex h-[10px] flex-none">
            <div className="flex-[25] bg-[#bdbdbd]" />
            <div className="flex-[6] bg-white" />
          </div>
        </div>
      </main>
      <Downloads />
      <Taskbar />
    </div>
  );
}
